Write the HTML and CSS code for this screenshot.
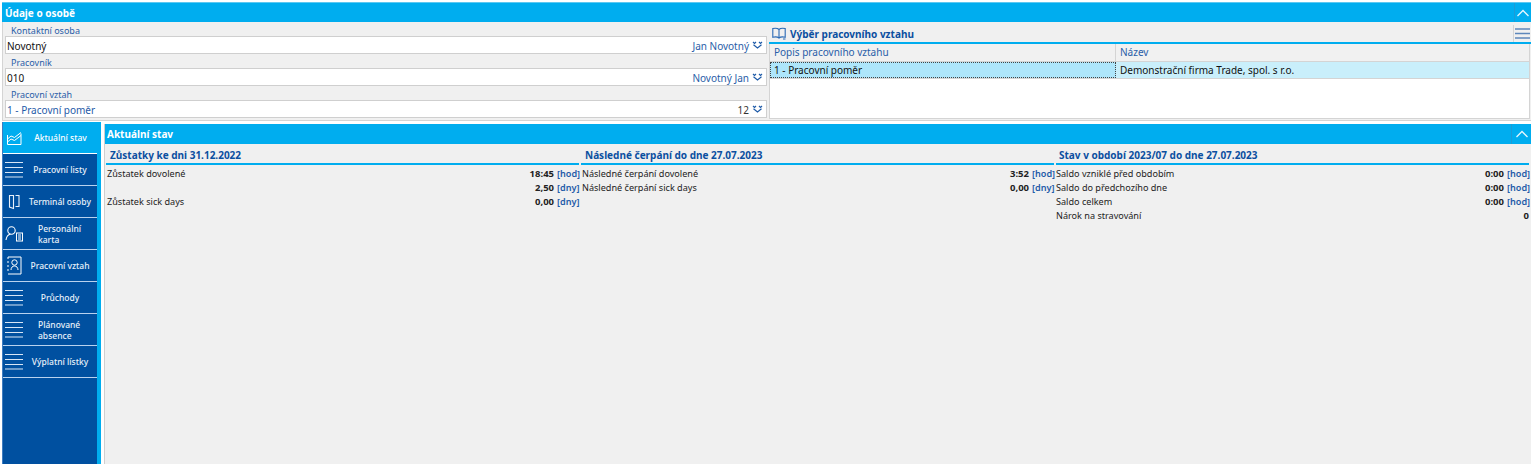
FILE: index.html
```html
<!DOCTYPE html>
<html lang="cs">
<head>
<meta charset="utf-8">
<title>Údaje o osobě</title>
<link rel="stylesheet" href="styles.css">
</head>
<body>
<svg class="defs" width="0" height="0" aria-hidden="true">
  <symbol id="dbl" viewBox="0 0 11 8"><path d="M1 1l1.500 1.500L4 1M7 1l1.500 1.500L10 1M1.500 3.800l4 3.200 4-3.200" fill="none" stroke="#1f5ba8" stroke-width="1.200"/></symbol>
  <symbol id="up" viewBox="0 0 14 8"><path d="M1.500 7L7 1.500 12.500 7" fill="none" stroke="#e6f7fe" stroke-width="1.300"/></symbol>
  <symbol id="lines" viewBox="0 0 18 16"><path d="M0 .5h18M0 5.500h18M0 10.500h18M0 15h18" stroke="#d7e5f5" stroke-width="1.100"/></symbol>
</svg>
<section class="person">
  <header class="bar top-bar"><span>Údaje o osobě</span><i class="collapse"><svg width="14" height="8"><use href="#up"/></svg></i></header>
  <div class="person-body">
    <div class="fields">
      <label>Kontaktní osoba</label>
      <div class="input"><span>Novotný</span><em>Jan Novotný</em><svg width="11" height="8"><use href="#dbl"/></svg></div>
      <label>Pracovník</label>
      <div class="input"><span>010</span><em>Novotný Jan</em><svg width="11" height="8"><use href="#dbl"/></svg></div>
      <label>Pracovní vztah</label>
      <div class="input"><span class="link">1 - Pracovní poměr</span><em class="dark">12</em><svg width="11" height="8"><use href="#dbl"/></svg></div>
    </div>
    <div class="picker">
      <div class="picker-title">
        <svg width="14" height="13" viewBox="0 0 14 13"><path d="M7 2.500C5.500 1 3 1 .8 1.500v8.700C3 9.700 5.500 9.700 7 11c1.500-1.300 4-1.300 6.200-.8V1.500C11 1 8.500 1 7 2.500zM7 2.500V11" fill="none" stroke="#2a69b5" stroke-width="1.100"/><path d="M11 12h2.500" stroke="#2a69b5"/></svg>
        <strong>Výběr pracovního vztahu</strong>
        <i class="menu"><svg width="15" height="11" viewBox="0 0 15 11"><path d="M0 1h15M0 5.500h15M0 10h15" stroke="#5d87bb" stroke-width="1.300"/></svg></i>
      </div>
      <div class="table">
        <div class="thead"><div class="c1">Popis pracovního vztahu</div><div class="c2">Název</div></div>
        <div class="trow"><div class="c1 focus">1 - Pracovní poměr</div><div class="c2">Demonstrační firma Trade, spol. s r.o.</div></div>
      </div>
    </div>
  </div>
</section>
<div class="lower">
  <nav class="side">
    <a class="active"><svg width="19" height="16" viewBox="0 0 19 16"><path d="M2.500 5v9.500h13.500V3.500M2.500 9l3.500-3 3.500 1.500 6.500-5M2.500 12l3.500-3 3.500 1.500 6.500-5" fill="none" stroke="#fff" stroke-width="1"/></svg><span>Aktuální stav</span></a>
    <a><svg width="18" height="16"><use href="#lines"/></svg><span>Pracovní listy</span></a>
    <a><svg width="18" height="17" viewBox="0 0 18 17"><path d="M4.500 2.500h4v13l-4-1.500zM10.500 2.500h3.500v11h-3.500" fill="none" stroke="#e8f0fa" stroke-width="1.100"/></svg><span>Terminál osoby</span></a>
    <a><svg width="18" height="17" viewBox="0 0 18 17"><circle cx="6.500" cy="5.500" r="3.700" fill="none" stroke="#fff" stroke-width="1.100"/><path d="M1 15c.5-3.500 2.500-5.500 4.500-5.700" fill="none" stroke="#fff" stroke-width="1.100"/><rect x="11.500" y="8" width="6" height="8" fill="none" stroke="#fff"/><path d="M13 10h3M13 12h3M13 14h3" stroke="#fff"/></svg><span class="wrap">Personální karta</span></a>
    <a><svg width="18" height="19" viewBox="0 0 18 19"><path d="M3 1h13v17H3" fill="none" stroke="#fff"/><path d="M3 1.500v2M3 5.500v2M3 9.500v2M3 13.500v2" stroke="#fff" stroke-width="2" stroke-dasharray="1 1"/><circle cx="9.500" cy="6.500" r="2.700" fill="none" stroke="#fff"/><path d="M6 14c0-2.500 1.500-4 3.500-4s3.500 1.500 3.500 4" fill="none" stroke="#fff"/></svg><span>Pracovní vztah</span></a>
    <a><svg width="18" height="16"><use href="#lines"/></svg><span>Průchody</span></a>
    <a><svg width="18" height="16"><use href="#lines"/></svg><span class="wrap">Plánované absence</span></a>
    <a><svg width="18" height="16"><use href="#lines"/></svg><span>Výplatní lístky</span></a>
  </nav>
  <main class="state">
    <header class="bar state-bar"><span>Aktuální stav</span><i class="collapse"><svg width="14" height="8"><use href="#up"/></svg></i></header>
    <div class="cols">
      <div class="col">
        <h3>Zůstatky ke dni 31.12.2022</h3>
        <dl>
          <div><dt>Zůstatek dovolené</dt><dd>18:45</dd><em>[hod]</em></div>
          <div><dt></dt><dd>2,50</dd><em>[dny]</em></div>
          <div><dt>Zůstatek sick days</dt><dd>0,00</dd><em>[dny]</em></div>
        </dl>
      </div>
      <div class="col">
        <h3>Následné čerpání do dne 27.07.2023</h3>
        <dl>
          <div><dt>Následné čerpání dovolené</dt><dd>3:52</dd><em>[hod]</em></div>
          <div><dt>Následné čerpání sick days</dt><dd>0,00</dd><em>[dny]</em></div>
        </dl>
      </div>
      <div class="col">
        <h3>Stav v období 2023/07 do dne 27.07.2023</h3>
        <dl>
          <div><dt>Saldo vzniklé před obdobím</dt><dd>0:00</dd><em>[hod]</em></div>
          <div><dt>Saldo do předchozího dne</dt><dd>0:00</dd><em>[hod]</em></div>
          <div><dt>Saldo celkem</dt><dd>0:00</dd><em>[hod]</em></div>
          <div><dt>Nárok na stravování</dt><dd>0</dd></div>
        </dl>
      </div>
    </div>
  </main>
</div>
</body>
</html>
```
FILE: styles.css
```css
* { box-sizing: border-box; }
html, body { margin: 0; height: 100%; }
body {
  width: 1536px;
  height: 464px;
  overflow: hidden;
  background: #fff;
  padding: 2px 5px 0 2px;
  font-family: "Noto Sans", "Open Sans", sans-serif;
  font-size: 9.5px;
  color: #1b1b1b;
  display: flex;
  flex-direction: column;
}
.defs { position: absolute; }
.bar {
  display: flex;
  align-items: center;
  justify-content: space-between;
  background: #00adef;
  color: #fff;
  font-weight: 700;
  font-size: 10px;
  padding-left: 3px;
}
.top-bar { height: 20px; border-top: 1px solid #5cc8f2; }
.state-bar { height: 20px; padding-left: 2px; }
.collapse {
  width: 17px;
  height: 100%;
  display: flex;
  align-items: center;
  justify-content: center;
  border-left: 1px solid #1d9bd6;
}
.state-bar .collapse { width: 20px; }
.person { background: #f0f0f0; height: 119px; margin-bottom: 1px; flex: none; }
.person-body {
  display: flex;
  height: 99px;
  padding: 3px 0 0 2px;
  border-left: 1px solid #d4d4d4;
  border-bottom: 1px solid #d4d4d4;
}
.fields { width: 762px; flex: none; display: flex; flex-direction: column; }
.fields label { flex: none; height: 11px; padding-left: 6px; line-height: 11px; font-size: 9px; color: #2a5ea8; }
.input {
  flex: none;
  height: 18px;
  margin-bottom: 3px;
  background: #fff;
  border: 1px solid #cfcfcf;
  display: flex;
  align-items: center;
  padding: 1px 3px 0 1px;
  font-size: 10px;
}
.input:last-child { margin-bottom: 0; }
.input span { flex: 1; color: #111; }
.input .link { color: #1f5ba8; }
.input em { font-style: normal; color: #2a5ea8; margin-right: 3px; }
.input .dark { color: #333; }
.input svg { margin-top: -2px; }
.picker { flex: 1; margin-left: 2px; display: flex; flex-direction: column; padding-bottom: 1px; }
.picker-title {
  height: 19px;
  flex: none;
  display: flex;
  align-items: center;
  gap: 4px;
  padding-left: 3px;
  color: #0b4fa0;
  border-bottom: 2px solid #00adef;
}
.picker-title strong { flex: 1; font-size: 10px; }
.menu { width: 18px; height: 17px; border-left: 1px solid #d4d4d4; display: flex; align-items: center; justify-content: center; }
.table { flex: 1; background: #fff; border: 1px solid #d4d4d4; border-top: 0; margin-right: 1px; }
.thead { display: flex; height: 18px; background: #f1f1f1; border-bottom: 1px solid #d4d4d4; color: #2a5ea8; font-size: 10px; line-height: 17px; }
.trow { display: flex; height: 17px; line-height: 16px; background: #c9effb; border-bottom: 1px solid #d4d4d4; font-size: 10px; color: #111; }
.c1 { width: 346px; padding-left: 4px; border-right: 1px solid #d4d4d4; }
.c2 { flex: 1; padding-left: 4px; }
.focus { background: #aee6fb; border: 1px dotted #444; padding-left: 3px; line-height: 15px; }
.lower { flex: 1; display: flex; min-height: 0; }
.side {
  width: 99px;
  background: #0050a0;
  border-right: 4px solid #00adef;
  border-left: 1px solid #3d7cc0;
  display: flex;
  flex-direction: column;
}
.side a {
  height: 32px;
  flex: none;
  display: flex;
  align-items: center;
  padding-left: 2px;
  color: #e8f0fa;
  font-size: 8.5px;
  font-weight: 500;
  border-bottom: 1px solid #b9d2ee;
}
.side a svg { flex: none; }
.side a span { flex: 1; text-align: center; line-height: 11px; padding: 0 3px 0 3px; }
.side a .wrap { text-align: left; padding: 0 14px 0 15px; }
.side .active { background: #00adef; color: #fff; border-bottom-color: #fff; }
.state {
  flex: 1;
  margin-left: 3px;
  background: #f0f0f0;
  border-left: 1px solid #cfcfcf;
  margin-top: 2px;
  min-width: 0;
}
.cols { display: flex; gap: 2px; padding: 0 2px 0 1px; }
.col { width: 473px; flex: none; }
.col:last-child { flex: 1; width: auto; }
.col h3 {
  margin: 0;
  height: 21px;
  padding: 4px 0 0 4px;
  font-size: 10px;
  line-height: 15px;
  color: #0b4fa0;
  border-bottom: 2px solid #00adef;
}
.col:last-child h3 { padding-left: 3px; }
.col dl { margin: 2px 0 0; }
.col dl div { display: flex; height: 14px; line-height: 14px; align-items: center; }
.col dt { flex: 1; color: #222; font-size: 9.1px; padding-left: 1px; }
.col:last-child dt { padding-left: 0; }
.col dd { margin: 0; font-weight: 700; color: #222; }
.col em { font-style: normal; color: #1f5ba8; font-weight: 600; font-size: 9.1px; margin-left: 3px; width: 22px; text-align: right; }
```
